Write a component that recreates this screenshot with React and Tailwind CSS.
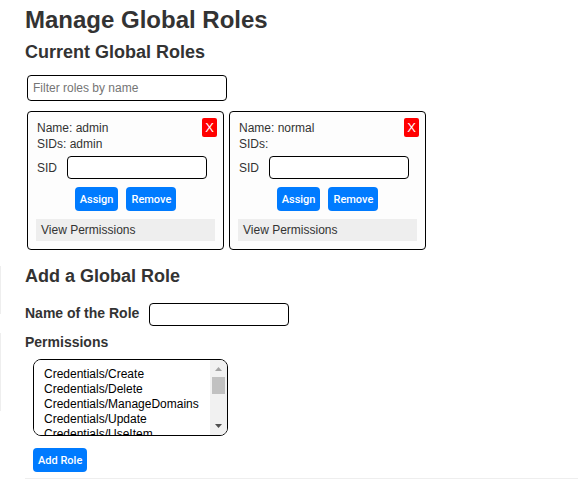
const permissions = [
  'Credentials/Create',
  'Credentials/Delete',
  'Credentials/ManageDomains',
  'Credentials/Update',
  'Credentials/UseItem',
  'Credentials/View',
];

const roles = [
  { name: 'admin', sids: 'admin' },
  { name: 'normal', sids: '' },
];

function ActionButton({ children }) {
  return (
    <button
      type="button"
      className="h-6 rounded bg-[#007bff] px-[5px] pt-px font-[Roboto,Arial,sans-serif] text-[11px] font-medium text-white"
    >
      {children}
    </button>
  );
}

function RoleCard({ name, sids }) {
  const id = `sid-${name}`;
  return (
    <article className="relative w-[197px] rounded border border-black bg-[#fdfdfd] p-2">
      <button
        type="button"
        aria-label={`Delete ${name}`}
        className="absolute top-1.5 right-1.5 h-[19px] w-[15px] rounded-xs bg-[#ff0000] text-center text-[13px] text-white"
      >
        X
      </button>
      <p className="px-px">Name: {name}</p>
      <p className="px-px">SIDs: {sids}</p>
      <div className="mt-1 flex items-center px-px">
        <label htmlFor={id} className="w-[30px]">
          SID
        </label>
        <input
          id={id}
          type="text"
          className="h-[23px] w-[140px] rounded border border-black bg-white px-1 outline-none"
        />
      </div>
      <div className="mt-2 flex justify-center gap-2">
        <ActionButton>Assign</ActionButton>
        <ActionButton>Remove</ActionButton>
      </div>
      <button
        type="button"
        className="mt-2 block h-[22px] w-full bg-[#eeeeee] px-[5px] text-left"
      >
        View Permissions
      </button>
    </article>
  );
}

function PermissionList() {
  return (
    <div className="ml-2 flex h-[77px] w-[195px] overflow-hidden rounded-lg border border-black bg-white">
      <select
        id="permissions"
        multiple
        size={5}
        className="h-full min-w-0 flex-1 appearance-none overflow-hidden bg-white pt-[7px] pl-2.5 text-black outline-none"
      >
        {permissions.map((permission) => (
          <option key={permission} className="h-[15px] min-h-0 p-0">
            {permission}
          </option>
        ))}
      </select>
      <div
        aria-hidden="true"
        className="flex w-[17px] flex-col items-center bg-[#f1f1f1]"
      >
        <svg viewBox="0 0 17 17" className="size-[17px]">
          <path d="M5 11h7L8.500 7z" fill="#a3a3a3" />
        </svg>
        <div className="h-[17px] w-[13px] bg-[#c1c1c1]" />
        <svg viewBox="0 0 17 17" className="mt-auto size-[17px]">
          <path d="M5 6h7l-3.500 4z" fill="#505050" />
        </svg>
      </div>
    </div>
  );
}

export default function App() {
  return (
    <div className="flex bg-white font-['Liberation_Sans',Arial,sans-serif] text-xs leading-4 text-[#333333]">
      <aside className="flex w-px flex-col gap-[19px] pt-[266px]">
        <div className="h-12 bg-[#eeeeee]" />
        <div className="h-[78px] bg-[#eeeeee]" />
      </aside>
      <main className="min-w-0 flex-1 pt-1 pl-6">
        <h1 className="text-2xl font-bold">Manage Global Roles</h1>
        <section>
          <h2 className="mt-1 text-lg leading-6 font-bold">Current Global Roles</h2>
          <input
            type="text"
            aria-label="Filter roles by name"
            placeholder="Filter roles by name"
            className="mt-[11px] ml-0.5 block h-[26px] w-[200px] rounded border border-black px-[5px] outline-none placeholder:text-[#757575]"
          />
          <div className="mt-2.5 ml-0.5 flex flex-wrap gap-[5px]">
            {roles.map((role) => (
              <RoleCard key={role.name} {...role} />
            ))}
          </div>
        </section>
        <section>
          <h2 className="mt-3.5 text-lg leading-6 font-bold">Add a Global Role</h2>
          <div className="mt-[15px] flex h-[23px] items-center gap-2.5">
            <label htmlFor="role-name" className="pb-1 text-sm leading-4 font-bold">
              Name of the Role
            </label>
            <input
              id="role-name"
              type="text"
              className="h-[23px] w-[140px] rounded border border-black px-1 outline-none"
            />
          </div>
          <label
            htmlFor="permissions"
            className="mt-2 mb-[9px] block text-sm leading-4 font-bold"
          >
            Permissions
          </label>
          <PermissionList />
          <div className="mt-3 ml-2 flex">
            <ActionButton>Add Role</ActionButton>
          </div>
          <hr className="mt-1.5 border-[#eeeeee]" />
        </section>
      </main>
    </div>
  );
}
